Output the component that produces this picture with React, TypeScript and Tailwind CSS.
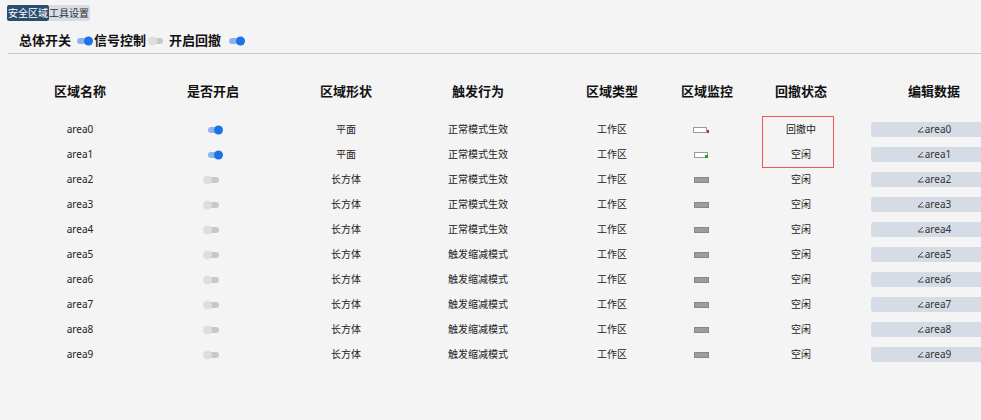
import React from 'react';

const font = { fontFamily: '"Noto Sans", "Noto Sans CJK SC", sans-serif' };

type Row = {
  name: string;
  on: boolean;
  shape: string;
  action: string;
  monitor: 'red' | 'green' | 'idle';
  status: string;
};

const rows: Row[] = [
  { name: 'area0', on: true, shape: '平面', action: '正常模式生效', monitor: 'red', status: '回撤中' },
  { name: 'area1', on: true, shape: '平面', action: '正常模式生效', monitor: 'green', status: '空闲' },
  { name: 'area2', on: false, shape: '长方体', action: '正常模式生效', monitor: 'idle', status: '空闲' },
  { name: 'area3', on: false, shape: '长方体', action: '正常模式生效', monitor: 'idle', status: '空闲' },
  { name: 'area4', on: false, shape: '长方体', action: '正常模式生效', monitor: 'idle', status: '空闲' },
  { name: 'area5', on: false, shape: '长方体', action: '触发缩减模式', monitor: 'idle', status: '空闲' },
  { name: 'area6', on: false, shape: '长方体', action: '触发缩减模式', monitor: 'idle', status: '空闲' },
  { name: 'area7', on: false, shape: '长方体', action: '触发缩减模式', monitor: 'idle', status: '空闲' },
  { name: 'area8', on: false, shape: '长方体', action: '触发缩减模式', monitor: 'idle', status: '空闲' },
  { name: 'area9', on: false, shape: '长方体', action: '触发缩减模式', monitor: 'idle', status: '空闲' },
];

const headers = ['区域名称', '是否开启', '区域形状', '触发行为', '区域类型', '区域监控', '回撤状态', '编辑数据'];

const grid = 'grid grid-cols-[134px_132px_134px_130px_138px_50px_140px_126px]';

function Toggle({ on }: { on: boolean }) {
  return (
    <span className={`relative inline-block w-[11px] h-[6px] rounded-full ${on ? 'bg-[#8db3ee]' : 'bg-[#c8c8c8]'}`}>
      <span
        className={`absolute top-1/2 -translate-y-1/2 w-[9px] h-[9px] rounded-full ${
          on ? 'right-[-4.5px] bg-[#1a73e8]' : 'left-[-4.5px] bg-[#dedede]'
        }`}
      />
    </span>
  );
}

function Monitor({ kind }: { kind: Row['monitor'] }) {
  if (kind === 'red') {
    return (
      <span className="ml-[12px] relative inline-block w-[14px] h-[6px] bg-white border border-[#9a9a9a]">
        <span className="absolute right-[-3px] bottom-[-1px] w-[2px] h-[3px] bg-[#e02424]" />
      </span>
    );
  }
  if (kind === 'green') {
    return (
      <span className="ml-[13px] relative inline-block w-[14px] h-[6px] bg-white border border-[#9a9a9a]">
        <span className="absolute right-[-1px] bottom-[-1px] w-[3px] h-[3px] bg-[#1f9d3a]" />
      </span>
    );
  }
  return <span className="ml-[13px] inline-block w-[15px] h-[6px] bg-[#9d9d9d] border border-[#888]" />;
}

function EditIcon() {
  return (
    <svg width="7" height="7" viewBox="0 0 7 7" className="mr-[1px]">
      <path d="M5.8 1 L1 6 H6.6" fill="none" stroke="#333" strokeWidth="0.9" />
    </svg>
  );
}

export default function App() {
  return (
    <div className="relative w-[981px] h-[420px] overflow-hidden bg-[#f4f4f4] text-[#222]" style={font}>
      {/* Tabs */}
      <div className="flex pt-[5px] pl-[7px]">
        <div className="h-[16px] px-[1px] leading-[16px] text-[10px] text-white bg-[#2c4d70] rounded-[2px]">安全区域</div>
        <div className="h-[16px] pr-[1px] leading-[16px] text-[10px] text-[#333] bg-[#d6dde6] rounded-r-[2px]">工具设置</div>
      </div>

      {/* Switches */}
      <div className="flex items-center h-[22px] mt-[9px] pl-[19px] text-[13px] font-bold text-[#111]">
        <span>总体开关</span>
        <span className="ml-[6px] mr-[6px] flex items-center"><Toggle on /></span>
        <span>信号控制</span>
        <span className="ml-[6px] mr-[6px] flex items-center"><Toggle on={false} /></span>
        <span>开启回撤</span>
        <span className="ml-[8px] flex items-center"><Toggle on /></span>
      </div>
      <div className="ml-[8px] mt-[1px] h-px bg-[#c8c8c8]" />

      {/* Table */}
      <div className="pl-[13px] mt-[26px]">
        <div className={`${grid} h-[24px] items-center text-[13px] font-bold text-[#111]`}>
          {headers.map(h => (
            <div key={h} className="text-center whitespace-nowrap">{h}</div>
          ))}
        </div>
        <div className="mt-[13px]">
          {rows.map(r => (
            <div key={r.name} className={`${grid} h-[25px] items-center text-[10px]`}>
              <div className="text-center">{r.name}</div>
              <div className="flex justify-center items-center"><Toggle on={r.on} /></div>
              <div className="text-center">{r.shape}</div>
              <div className="text-center">{r.action}</div>
              <div className="text-center">工作区</div>
              <div className="flex items-center"><Monitor kind={r.monitor} /></div>
              <div className="text-center">{r.status}</div>
              <div className="flex items-center justify-center h-[15px] rounded-[3px] bg-[#d5dce6] text-[#333]">
                <EditIcon />
                {r.name}
              </div>
            </div>
          ))}
        </div>
      </div>

      {/* Highlight box over retract status */}
      <div className="absolute left-[762px] top-[116px] w-[72px] h-[52px] border border-[#f05454]" />
    </div>
  );
}
